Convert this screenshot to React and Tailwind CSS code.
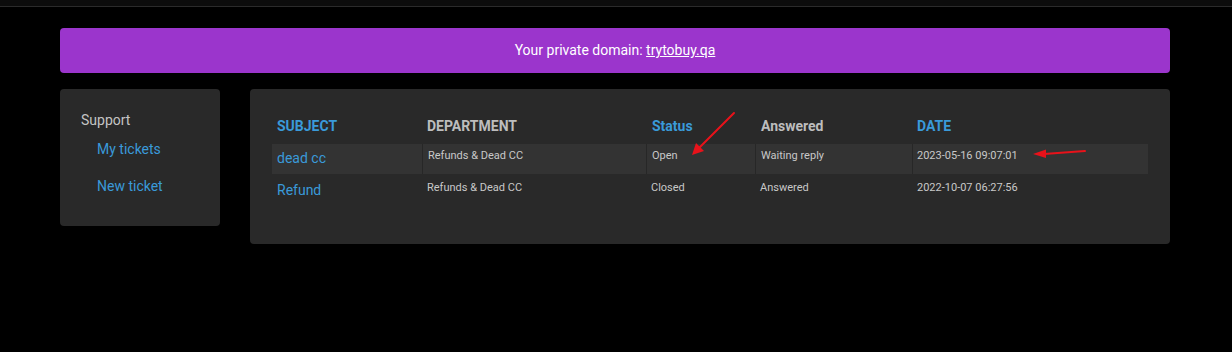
export default function App() {
  const rows = [
    { subject: 'dead cc', dept: 'Refunds & Dead CC', status: 'Open', answered: 'Waiting reply', date: '2023-05-16 09:07:01', hl: true },
    { subject: 'Refund', dept: 'Refunds & Dead CC', status: 'Closed', answered: 'Answered', date: '2022-10-07 06:27:56', hl: false },
  ];
  const cols = 'grid grid-cols-[150px_224px_109px_157px_236px]';

  return (
    <div className="relative w-[1232px] h-[352px] bg-black font-['Roboto',sans-serif] overflow-hidden">
      <div className="h-[7px] bg-[#0c0c0c] border-b border-[#2b2b2b]" />

      <div className="pl-[60px] pr-[62px] pt-[21px]">
        <div className="h-[45px] rounded-[4px] bg-[#9b35cc] flex items-center justify-center text-white text-[14px]">
          Your private domain:&nbsp;<a className="underline">trytobuy.qa</a>
        </div>

        <div className="flex gap-[30px] mt-[16px] items-start">
          <div className="w-[160px] h-[137px] rounded-[4px] bg-[#292929] pt-[21px] pl-[21px] text-[14px] leading-[20px]">
            <div className="text-[#c4c4c4]">Support</div>
            <div className="pl-[16px] mt-[9px] text-[#3a9ad9]">My tickets</div>
            <div className="pl-[16px] mt-[17px] text-[#3a9ad9]">New ticket</div>
          </div>

          <div className="flex-1 h-[155px] rounded-[4px] bg-[#292929] px-[22px] pt-[23px]">
            <div className={`${cols} h-[32px] pt-[4px] text-[14px] leading-[20px] font-bold`}>
              <div className="pl-[5px] text-[#3a9ad9]">SUBJECT</div>
              <div className="pl-[5px] text-[#bdbdbd]">DEPARTMENT</div>
              <div className="pl-[6px] text-[#3a9ad9]">Status</div>
              <div className="pl-[6px] text-[#bdbdbd]">Answered</div>
              <div className="pl-[5px] text-[#3a9ad9]">DATE</div>
            </div>
            {rows.map((r) => {
              const b = r.hl ? 'border-l border-[#272727] pt-[4px]' : 'pt-[6px]';
              return (
                <div key={r.subject} className={`${cols} h-[30px] ${r.hl ? 'bg-[#333333]' : ''}`}>
                  <div className={`pl-[5px] text-[14px] leading-[20px] text-[#3a9ad9] ${r.hl ? 'pt-[4px]' : 'pt-[6px]'}`}>{r.subject}</div>
                  <div className={`pl-[5px] text-[11px] leading-[16px] text-[#c8c8c8] ${b}`}>{r.dept}</div>
                  <div className={`pl-[5px] text-[11px] leading-[16px] text-[#c8c8c8] ${b}`}>{r.status}</div>
                  <div className={`pl-[5px] text-[11px] leading-[16px] text-[#c8c8c8] ${b}`}>{r.answered}</div>
                  <div className={`text-[11px] leading-[16px] text-[#c8c8c8] ${b} ${r.hl ? 'pl-[4px]' : 'pl-[5px]'}`}>{r.date}</div>
                </div>
              );
            })}
          </div>
        </div>
      </div>

      <svg className="absolute left-0 top-0 pointer-events-none" width="1232" height="352">
        <line x1="734" y1="113" x2="699" y2="148" stroke="#e8121a" strokeWidth="2" strokeLinecap="round" />
        <polygon points="692,155 696,143 704,151" fill="#e8121a" />
        <line x1="1085" y1="151" x2="1044" y2="154" stroke="#e8121a" strokeWidth="2" strokeLinecap="round" />
        <polygon points="1033,154 1046,149.5 1046,158" fill="#e8121a" />
      </svg>
    </div>
  );
}
